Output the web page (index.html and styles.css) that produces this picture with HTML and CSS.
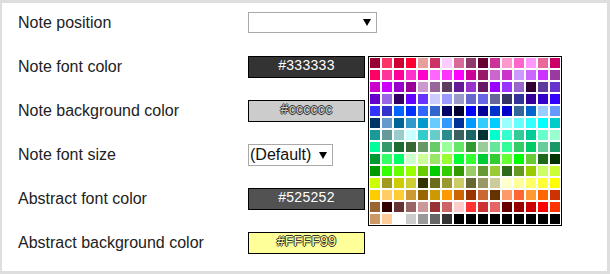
FILE: index.html
```html
<!DOCTYPE html>
<html lang="en">
<head>
    <meta charset="UTF-8">
    <meta name="viewport" content="width=device-width, initial-scale=1.0">
    <title>Note settings</title>
    <link rel="stylesheet" href="styles.css">
</head>
<body>
    <div class="frame">
        <div class="settings">
            <div class="label">Note position</div>
            <div class="value">
                <span class="select wide"><span class="select-text"></span><span class="arrow"></span></span>
            </div>

            <div class="label">Note font color</div>
            <div class="value picker">
                <div class="color-box dark" style="background: #333333;">#333333</div>
                <div class="palette" id="palette"></div>
            </div>

            <div class="label">Note background color</div>
            <div class="value">
                <div class="color-box light" style="background: #cccccc; color: #cccccc;">#cccccc</div>
            </div>

            <div class="label">Note font size</div>
            <div class="value">
                <span class="select narrow"><span class="select-text">(Default)</span><span class="arrow"></span></span>
            </div>

            <div class="label">Abstract font color</div>
            <div class="value">
                <div class="color-box dark" style="background: #525252;">#525252</div>
            </div>

            <div class="label">Abstract background color</div>
            <div class="value">
                <div class="color-box light" style="background: #FFFF99; color: #FFFF99;">#FFFF99</div>
            </div>
        </div>
    </div>
    <script>
        // palette colours, row by row
        const colors = [
            '#990033','#FF3366','#CC0033','#FF0033','#E89E9A','#CC3366','#FFCCFF','#D86A9A','#8E3A6A','#660033','#CC3399','#FF99CC','#FF66CC','#FF99FF','#E8689A','#CC0066',
            '#FF0066','#FF3399','#FF0099','#FF33CC','#FF00CC','#FF66FF','#FF33FF','#FF00FF','#CC0099','#991A66','#CC66CC','#CC33CC','#CC99FF','#CC66FF','#CC33FF','#9A3AA0',
            '#CC00CC','#CC00FF','#9900CC','#990099','#CC99CC','#996699','#5E3A60','#661A99','#9933CC','#661A66','#9900FF','#9933FF','#9966CC','#330033','#5E3A9C','#6633CC',
            '#6600CC','#9966E6','#330066','#6600FF','#6633FF','#CCCCFF','#9999FF','#9999CC','#6666CC','#6666E6','#666699','#333366','#333399','#330099','#3300CC','#3300FF',
            '#3333FF','#3333CC','#0066FF','#0033FF','#3366FF','#3366CC','#000066','#000033','#0000FF','#000099','#0033CC','#0000CC','#336699','#0066CC','#99CCFF','#6699FF',
            '#003366','#6699CC','#006699','#3399CC','#0099CC','#66CCFF','#3399FF','#003399','#0099FF','#33CCFF','#00CCFF','#99FFFF','#66FFFF','#33FFFF','#00FFFF','#00CCCC',
            '#1A9999','#669999','#99CCCC','#CCFFFF','#33CCCC','#66CCCC','#2A8C8C','#3A6060','#1A6666','#003333','#00FFCC','#33FFCC','#33CC99','#00CC99','#66FFCC','#99FFCC',
            '#00FF99','#33996A','#1E6B33','#3A6633','#669966','#66CC66','#99FF99','#66E666','#339933','#99CC99','#66E699','#33FF99','#33CC66','#00CC66','#66CC99','#1A9966',
            '#009933','#33FF66','#00FF66','#CCFFCC','#CCFF99','#99E666','#99FF33','#00FF33','#33FF33','#00CC33','#33CC33','#66FF33','#00FF00','#66CC33','#1B6B1B','#003300',
            '#009900','#33FF00','#66FF00','#99FF00','#66CC00','#00CC00','#33CC00','#339900','#99CC66','#669933','#99CC33','#2E6A1A','#669922','#99CC00','#CCFF66','#CCFF33',
            '#CCFF00','#A09A1E','#CCCC00','#CCCC33','#333300','#6B6B1E','#99992E','#CCCC66','#666633','#999966','#CCCC99','#FFFFCC','#FFFF99','#FFFF66','#FFFF33','#FFFF00',
            '#FFCC00','#FFCC66','#FFCC33','#CC9933','#996600','#CC9900','#FF9900','#CC6600','#993300','#CC6633','#663300','#FF9966','#FF6633','#FF9933','#FF6600','#CC3300',
            '#996633','#330000','#663333','#996666','#CC9999','#993333','#CC6666','#FFCCCC','#FF3333','#CC3333','#E66666','#660000','#990000','#CC0000','#FF0000','#FF3300',
            '#CC9966','#FFCC99','#FFFFFF','#CCCCCC','#999999','#666666','#333333','#000000','#000000','#000000','#000000','#000000','#000000','#000000','#000000','#000000'
        ];

        const palette = document.getElementById('palette');
        colors.forEach(c => {
            const cell = document.createElement('div');
            cell.className = 'swatch';
            cell.style.background = c;
            palette.appendChild(cell);
        });
    </script>
</body>
</html>
```

FILE: styles.css
```css
body {
    margin: 0;
    padding: 0;
    font-family: "Liberation Sans", Arial, sans-serif;
    background-color: #fff;
}
.frame {
    box-sizing: border-box;
    width: 610px;
    height: 274px;
    border: 3px solid #dedede;
    border-left-width: 2px;
    background: #fff;
}
.settings {
    display: grid;
    grid-template-columns: 230px auto;
    grid-auto-rows: 22px;
    row-gap: 22px;
    align-items: center;
    padding: 9px 0 0 16px;
}
.label {
    font-size: 16px;
    color: #222;
    line-height: 22px;
}
.value {
    height: 22px;
}
.picker {
    position: relative;
}
.select {
    box-sizing: border-box;
    display: flex;
    align-items: center;
    justify-content: space-between;
    height: 22px;
    border: 1px solid #a9a9a9;
    background: #fff;
    padding: 0 5px 0 1px;
    font-size: 16px;
    color: #111;
}
.select.wide {
    width: 129px;
    height: 21px;
}
.select.narrow {
    width: 85px;
}
.arrow {
    width: 0;
    height: 0;
    border-left: 4px solid transparent;
    border-right: 4px solid transparent;
    border-top: 7px solid #000;
}
.color-box {
    box-sizing: border-box;
    width: 117px;
    height: 22px;
    border: 1px solid #000;
    font-size: 14px;
    line-height: 16px;
    text-align: center;
    letter-spacing: 0.3px;
}
.color-box.dark {
    color: #fff;
}
.color-box.light {
    text-shadow: -1px 0 #333, 1px 0 #333, 0 -1px #333, 0 1px #333;
}
.palette {
    position: absolute;
    left: 120px;
    top: 0;
    display: grid;
    grid-template-columns: repeat(16, 10px);
    grid-auto-rows: 10px;
    gap: 2px;
    padding: 1px;
    border: 1px solid #000;
    background: #fff;
}
```
